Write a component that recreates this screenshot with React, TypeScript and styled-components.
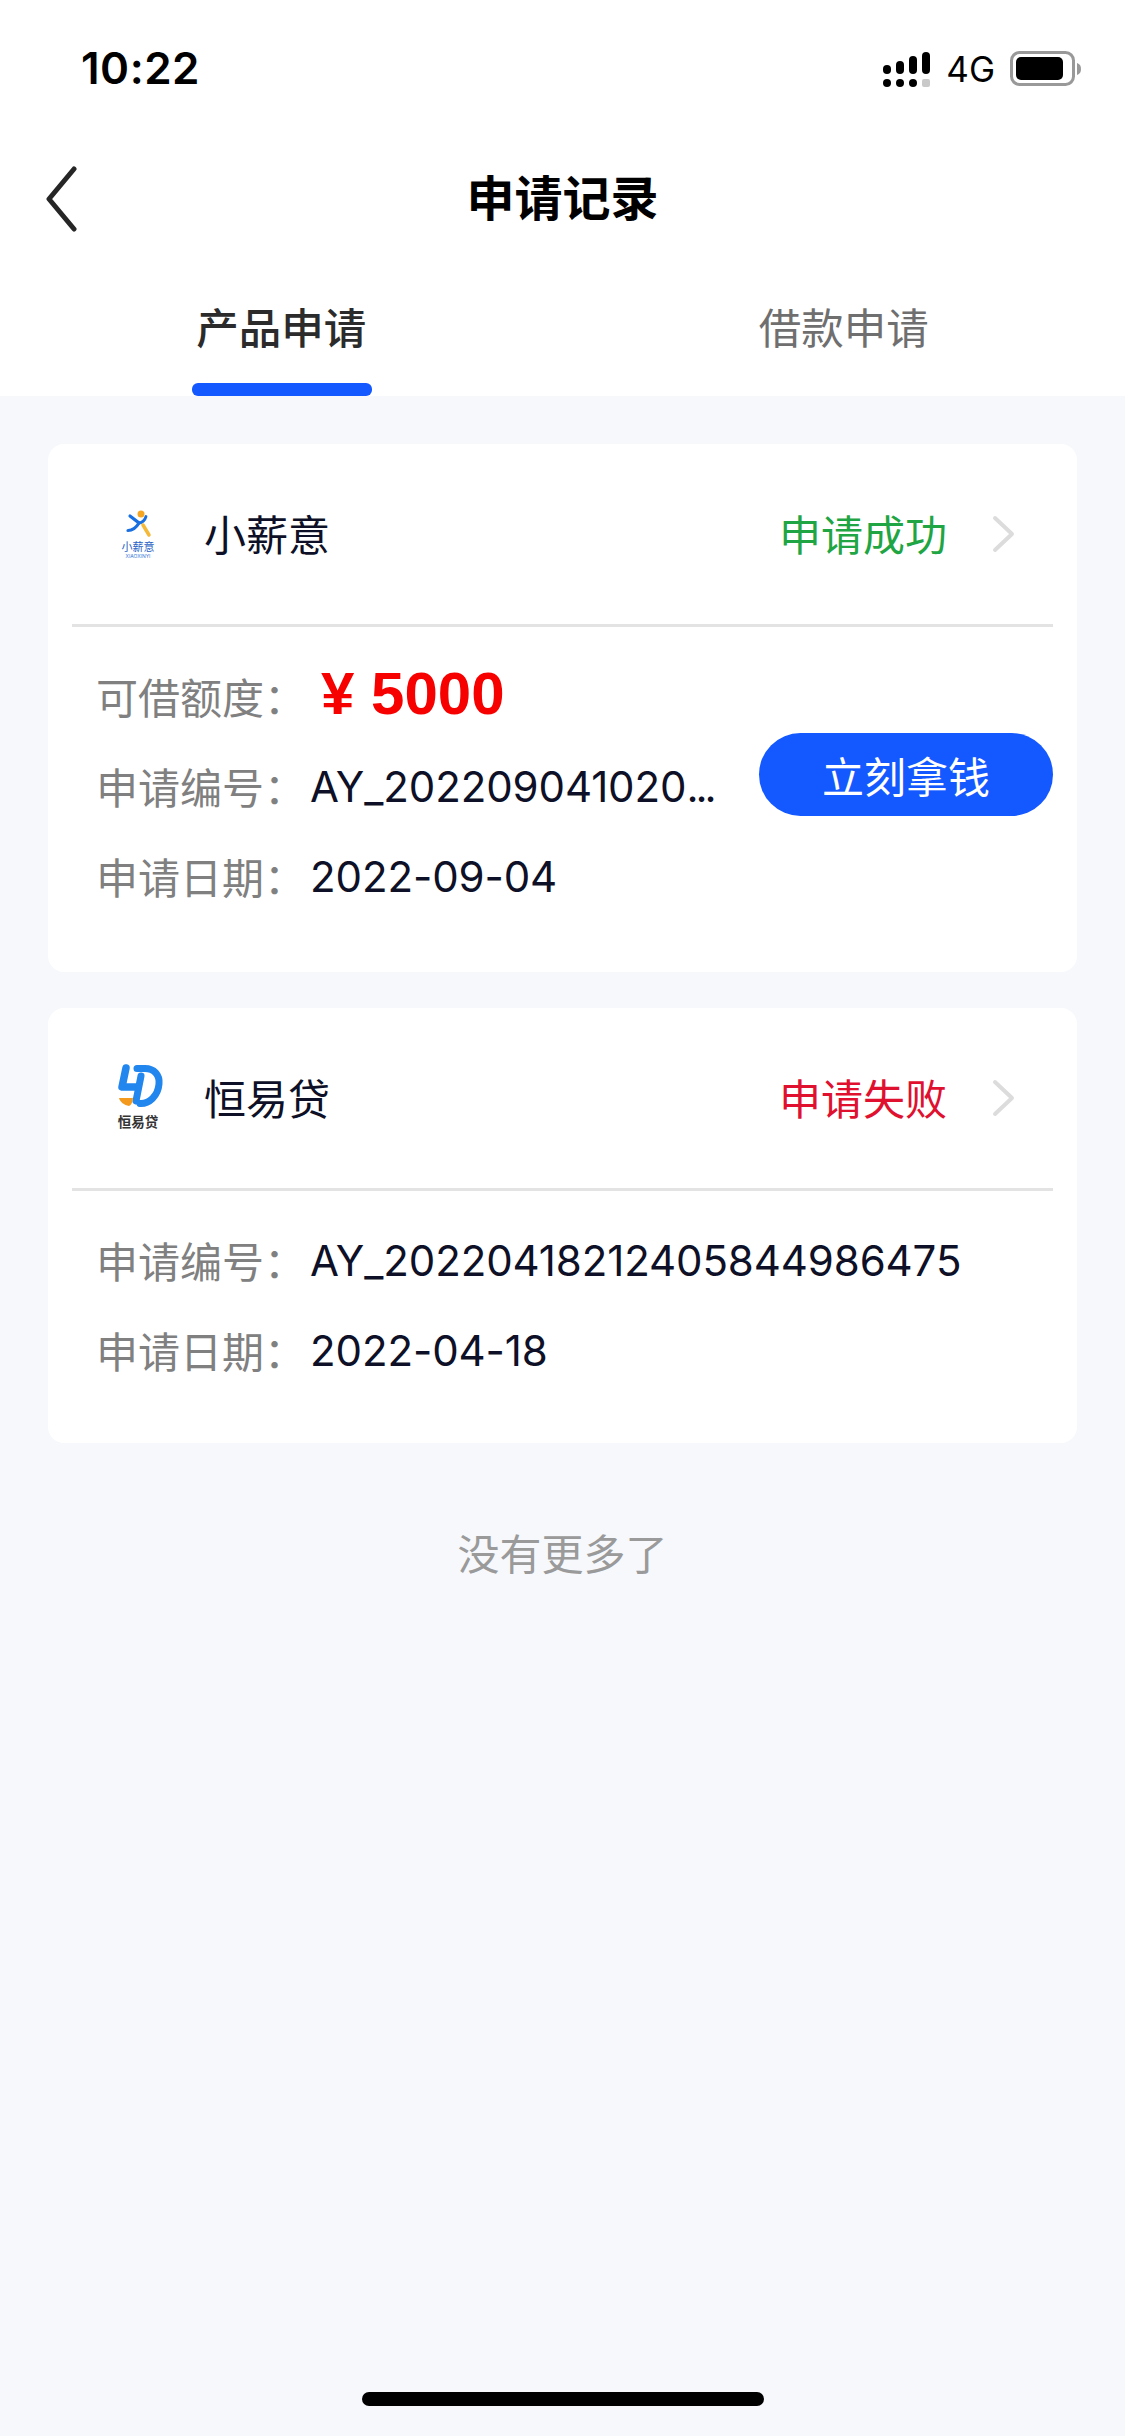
import styled, { createGlobalStyle } from "styled-components";

const GlobalStyle = createGlobalStyle`
  html, body {
    margin: 0;
    padding: 0;
    background: #f6f8fc;
  }
  * {
    box-sizing: border-box;
  }
`;

const FONT = `Inter, "Noto Sans CJK SC", sans-serif`;

const Page = styled.div`
  position: relative;
  width: 1125px;
  height: 2436px;
  display: flex;
  flex-direction: column;
  background: #f6f8fc;
  font-family: ${FONT};
  color: #0d1026;
  overflow: hidden;
`;

const Top = styled.header`
  height: 396px;
  background: #fff;
  display: flex;
  flex-direction: column;
`;

const StatusBar = styled.div`
  height: 132px;
  padding: 0 43px 0 81px;
  display: flex;
  align-items: center;
  justify-content: space-between;
`;

const Clock = styled.span`
  font-size: 44px;
  font-weight: 600;
  color: #000;
  letter-spacing: 0.5px;
  margin-top: 4px;
`;

const StatusRight = styled.div`
  display: flex;
  align-items: center;
  gap: 15px;
  margin-top: 6px;
`;

const NetLabel = styled.span`
  font-size: 35px;
  font-weight: 400;
  color: #000;
`;

const NavBar = styled.div`
  height: 126px;
  position: relative;
  display: flex;
  align-items: center;
  justify-content: center;
`;

const BackButton = styled.div`
  position: absolute;
  left: 44px;
  top: 34px;
  line-height: 0;
`;

const Title = styled.h1`
  margin: 0;
  font-size: 48px;
  font-weight: 700;
  color: #000;
`;

const Tabs = styled.div`
  flex: 1;
  display: grid;
  grid-template-columns: 1fr 1fr;
`;

const Tab = styled.div<{ $active?: boolean }>`
  position: relative;
  display: flex;
  justify-content: center;
  padding-top: 39px;
  font-size: 42.5px;
  line-height: 64px;
  font-weight: ${(p) => (p.$active ? 500 : 400)};
  color: ${(p) => (p.$active ? "#2b2b2b" : "#6f6f6f")};
  &::after {
    content: "";
    display: ${(p) => (p.$active ? "block" : "none")};
    position: absolute;
    left: 192px;
    bottom: 0;
    width: 180px;
    height: 13px;
    border-radius: 6px;
    background: #1458ff;
  }
`;

const List = styled.main`
  flex: 1;
  padding: 48px 48px 0 48px;
  display: flex;
  flex-direction: column;
  gap: 36px;
`;

const Card = styled.section<{ $height: number }>`
  height: ${(p) => p.$height}px;
  background: #fff;
  border-radius: 16px;
  padding: 0 24px;
`;

const CardHead = styled.div`
  height: 183px;
  display: flex;
  align-items: center;
  border-bottom: 3px solid #e3e3e3;
`;

const LogoBox = styled.div`
  width: 90px;
  margin-left: 20px;
  line-height: 0;
`;

const Name = styled.span`
  margin-left: 22px;
  margin-top: -4px;
  font-size: 42px;
  flex: 1;
`;

const Status = styled.span<{ $color: string }>`
  font-size: 42px;
  margin-top: -4px;
  color: ${(p) => p.$color};
`;

const Chevron = styled.div`
  margin: 0 37px 0 45px;
  line-height: 0;
`;

const CardBody = styled.div<{ $top: number }>`
  position: relative;
  padding: ${(p) => p.$top}px 0 0 24px;
  display: flex;
  flex-direction: column;
  gap: 30px;
`;

const Row = styled.div`
  display: flex;
  align-items: center;
  height: 60px;
`;

const Label = styled.span`
  width: 214px;
  font-size: 42px;
  color: #808080;
  white-space: nowrap;
  margin-top: -1px;
`;

const Value = styled.span`
  font-size: 42px;
  color: #0d1026;
  letter-spacing: -0.1px;
  white-space: nowrap;
`;

const Dots = styled.span`
  letter-spacing: -3px;
`;

const Amount = styled.span`
  font-size: 60px;
  font-weight: 700;
  color: #f60000;
  margin-left: 11px;
  margin-top: -6px;
  font-family: "Liberation Sans", sans-serif;
  white-space: pre;
`;

const TakeButton = styled.button`
  position: absolute;
  right: 0;
  top: 106px;
  width: 294px;
  height: 83px;
  border: 0;
  border-radius: 42px;
  background: #1458ff;
  color: #fff;
  font-family: ${FONT};
  font-size: 42px;
  padding: 0;
`;

const NoMore = styled.div`
  margin-top: 46px;
  text-align: center;
  font-size: 42px;
  line-height: 60px;
  color: #9a9a9a;
`;

const HomeBar = styled.div`
  position: absolute;
  left: 362px;
  top: 2392px;
  width: 402px;
  height: 14px;
  border-radius: 7px;
  background: #000;
`;

function SignalIcon() {
  return (
    <svg width="48" height="35" viewBox="0 0 48 35">
      <rect x="0" y="13" width="8" height="9" rx="4" fill="#000" />
      <rect x="13" y="9" width="8" height="13" rx="4" fill="#000" />
      <rect x="26" y="4" width="8" height="18" rx="4" fill="#000" />
      <rect x="39" y="0" width="8" height="22" rx="4" fill="#000" />
      <circle cx="4" cy="31" r="4" fill="#000" />
      <circle cx="17" cy="31" r="4" fill="#000" />
      <circle cx="30" cy="31" r="4" fill="#000" />
      <rect x="39" y="27" width="8" height="8" rx="2" fill="#c9c9c9" />
    </svg>
  );
}

function BatteryIcon() {
  return (
    <svg width="72" height="36" viewBox="0 0 72 36">
      <rect x="1.5" y="1.5" width="62" height="32" rx="8" fill="none" stroke="#999" strokeWidth="3" />
      <rect x="6" y="6" width="47" height="23" rx="5" fill="#000" />
      <path d="M67 12 C70 13 71 15 71 18 C71 21 70 23 67 24 Z" fill="#999" />
    </svg>
  );
}

function BackIcon() {
  return (
    <svg width="34" height="66" viewBox="0 0 34 66">
      <path d="M30 3 L5 33 L30 63" fill="none" stroke="#262626" strokeWidth="5" strokeLinecap="round" strokeLinejoin="round" />
    </svg>
  );
}

function ChevronIcon() {
  return (
    <svg width="24" height="38" viewBox="0 0 24 38">
      <path d="M3 3 L20 19 L3 35" fill="none" stroke="#dcdcdc" strokeWidth="4" strokeLinecap="round" strokeLinejoin="round" />
    </svg>
  );
}

function XiaoxinLogo() {
  return (
    <svg width="90" height="90" viewBox="0 0 90 90">
      <circle cx="49" cy="25" r="3.5" fill="#f5a623" />
      <path d="M38 27 L47 34 C44 39 40 41.5 36 41.5" fill="none" stroke="#1a6fe0" strokeWidth="3.2" strokeLinecap="round" />
      <path d="M54 27.5 C53 31 50 33.5 47 34" fill="none" stroke="#1a6fe0" strokeWidth="2.8" strokeLinecap="round" />
      <path d="M51 36 L57 46" fill="none" stroke="#f5b93a" strokeWidth="3.5" strokeLinecap="round" />
      <text x="46" y="61.5" textAnchor="middle" fontSize="11" fill="#2a62c4" fontFamily="Noto Sans CJK SC">小薪意</text>
      <text x="46" y="68.5" textAnchor="middle" fontSize="5" fill="#3a78d8" fontFamily="Inter">XIAOXINYI</text>
    </svg>
  );
}

function HengyiLogo() {
  return (
    <svg width="90" height="90" viewBox="0 0 90 90">
      <path d="M34 15 L30 34 L44 34" fill="none" stroke="#2186ee" strokeWidth="7.5" strokeLinecap="round" strokeLinejoin="round" />
      <path d="M49 23 L44 48" fill="none" stroke="#2186ee" strokeWidth="7" strokeLinecap="round" />
      <path d="M45 15.5 L53 15.5 C62 15.5 68 22 67 31 C66 43 57 51 48 50.5" fill="none" stroke="#2186ee" strokeWidth="7" strokeLinecap="round" />
      <path d="M27 45 L41 45 C41 49 39 52 37 53 C32 52 28 49 27 45 Z" fill="#f39a1e" />
      <text x="46" y="74" textAnchor="middle" fontSize="13.5" fontWeight="700" fill="#333" fontFamily="Noto Sans CJK SC">恒易贷</text>
    </svg>
  );
}

export default function App() {
  return (
    <Page>
      <GlobalStyle />
      <Top>
        <StatusBar>
          <Clock>10:22</Clock>
          <StatusRight>
            <SignalIcon />
            <NetLabel>4G</NetLabel>
            <BatteryIcon />
          </StatusRight>
        </StatusBar>
        <NavBar>
          <BackButton>
            <BackIcon />
          </BackButton>
          <Title>申请记录</Title>
        </NavBar>
        <Tabs>
          <Tab $active>产品申请</Tab>
          <Tab>借款申请</Tab>
        </Tabs>
      </Top>
      <List>
        <Card $height={528}>
          <CardHead>
            <LogoBox>
              <XiaoxinLogo />
            </LogoBox>
            <Name>小薪意</Name>
            <Status $color="#1fa543">申请成功</Status>
            <Chevron>
              <ChevronIcon />
            </Chevron>
          </CardHead>
          <CardBody $top={39}>
            <Row>
              <Label>可借额度：</Label>
              <Amount>¥ 5000</Amount>
            </Row>
            <Row>
              <Label>申请编号：</Label>
              <Value>
                AY_202209041020<Dots>...</Dots>
              </Value>
            </Row>
            <Row>
              <Label>申请日期：</Label>
              <Value>2022-09-04</Value>
            </Row>
            <TakeButton>立刻拿钱</TakeButton>
          </CardBody>
        </Card>
        <Card $height={435}>
          <CardHead>
            <LogoBox>
              <HengyiLogo />
            </LogoBox>
            <Name>恒易贷</Name>
            <Status $color="#e0102f">申请失败</Status>
            <Chevron>
              <ChevronIcon />
            </Chevron>
          </CardHead>
          <CardBody $top={39}>
            <Row>
              <Label>申请编号：</Label>
              <Value>AY_20220418212405844986475</Value>
            </Row>
            <Row>
              <Label>申请日期：</Label>
              <Value>2022-04-18</Value>
            </Row>
          </CardBody>
        </Card>
        <NoMore>没有更多了</NoMore>
      </List>
      <HomeBar />
    </Page>
  );
}
